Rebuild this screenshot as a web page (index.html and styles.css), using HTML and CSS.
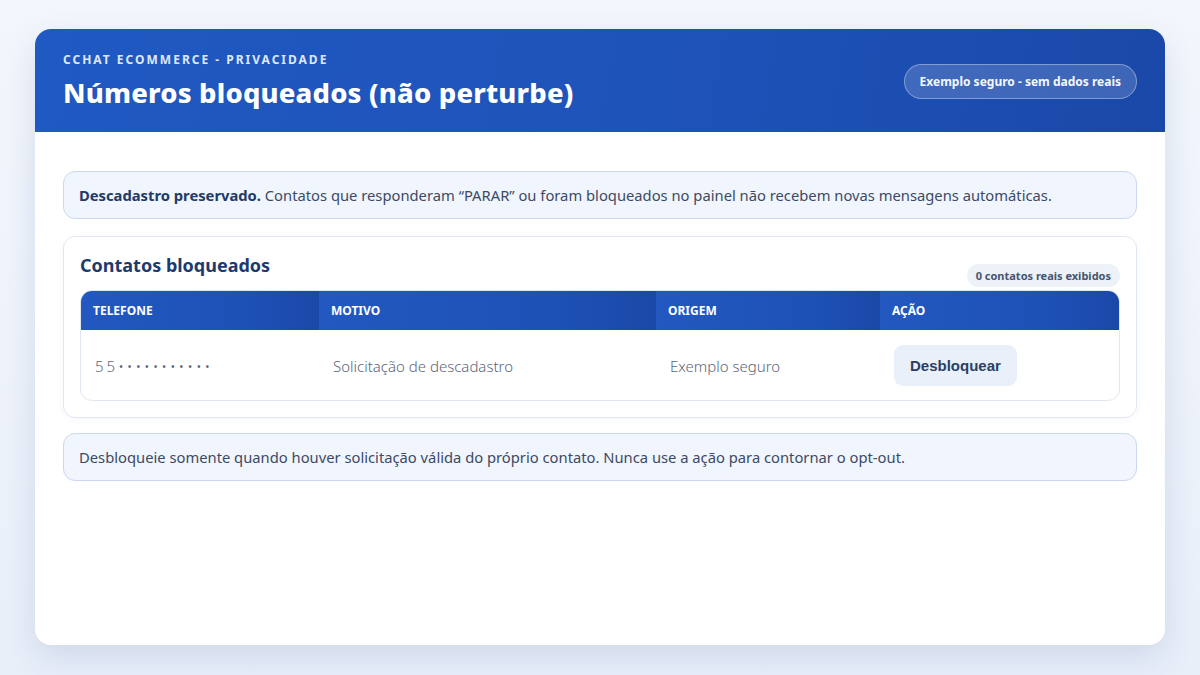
FILE: index.html
```html
<!DOCTYPE html>
<html lang="pt-BR">
<head>
<meta charset="utf-8">
<title>Números bloqueados</title>
<link rel="stylesheet" href="styles.css">
</head>
<body>
<main class="panel">
  <header class="panel-head">
    <div class="head-text">
      <div class="eyebrow">CCHAT ECOMMERCE - PRIVACIDADE</div>
      <h1 class="title">Números bloqueados (não perturbe)</h1>
    </div>
    <span class="safe-pill">Exemplo seguro - sem dados reais</span>
  </header>

  <section class="panel-body">
    <div class="note"><strong>Descadastro preservado.</strong> Contatos que responderam “PARAR” ou foram bloqueados no painel não recebem novas mensagens automáticas.</div>

    <div class="card">
      <div class="card-head">
        <h2 class="card-title">Contatos bloqueados</h2>
        <span class="count">0 contatos reais exibidos</span>
      </div>
      <div class="table-wrap">
        <table class="blocked">
          <thead>
            <tr>
              <th class="c-phone">TELEFONE</th>
              <th class="c-reason">MOTIVO</th>
              <th class="c-origin">ORIGEM</th>
              <th class="c-action">AÇÃO</th>
            </tr>
          </thead>
          <tbody>
            <tr>
              <td class="phone">55•••••••••••</td>
              <td>Solicitação de descadastro</td>
              <td>Exemplo seguro</td>
              <td><button class="unblock" type="button">Desbloquear</button></td>
            </tr>
          </tbody>
        </table>
      </div>
    </div>

    <div class="note plain">Desbloqueie somente quando houver solicitação válida do próprio contato. Nunca use a ação para contornar o opt-out.</div>
  </section>
</main>
</body>
</html>
```

FILE: styles.css
```css
* { box-sizing: border-box; }

html, body { height: 100%; }

body {
  margin: 0;
  padding: 29px 35px 30px;
  background: linear-gradient(180deg, #f3f6fc 0%, #e9eff9 100%);
  font-family: "Noto Sans", "Open Sans", sans-serif;
  color: #3b4a66;
}

.panel {
  height: 616px;
  background: #ffffff;
  border-radius: 16px;
  overflow: hidden;
  box-shadow: 0 12px 32px rgba(40, 80, 150, 0.14);
}

.panel-head {
  height: 103px;
  padding: 23px 28px 0;
  display: flex;
  justify-content: space-between;
  align-items: flex-start;
  background: linear-gradient(100deg, #2059c2 0%, #1e52b8 60%, #1a48a8 100%);
  color: #fff;
}

.eyebrow {
  font-size: 12px;
  font-weight: 700;
  letter-spacing: 2px;
  color: #dfe8fa;
  line-height: 16px;
}

.title {
  margin: 8px 0 0;
  font-size: 27.4px;
  font-weight: 800;
  line-height: 34px;
  letter-spacing: 0.2px;
}

.safe-pill {
  margin-top: 12px;
  height: 35px;
  padding: 0 15px;
  display: flex;
  align-items: center;
  border-radius: 18px;
  background: rgba(255, 255, 255, 0.16);
  border: 1px solid rgba(255, 255, 255, 0.35);
  font-size: 12px;
  font-weight: 700;
  color: #f4f7ff;
}

.panel-body {
  padding: 39px 28px 0;
  display: flex;
  flex-direction: column;
}

.note {
  min-height: 48px;
  padding: 0 15px;
  display: flex;
  align-items: center;
  background: #f0f5fe;
  border: 1px solid #cad8ee;
  border-radius: 12px;
  font-size: 14.75px;
  color: #3d4a63;
  white-space: pre-wrap;
}

.note strong {
  font-weight: 700;
  color: #223a66;
}

.note.plain { margin-top: 15px; }

.card {
  margin-top: 17px;
  border: 1px solid #e0e7f2;
  border-radius: 12px;
  padding: 16px;
  box-shadow: 0 2px 8px rgba(40, 80, 150, 0.04);
}

.card-head {
  height: 37px;
  display: flex;
  justify-content: space-between;
  align-items: flex-start;
}

.card-title {
  margin: 0;
  font-size: 18px;
  font-weight: 700;
  color: #1d3a70;
  line-height: 24px;
}

.count {
  margin-top: 11px;
  height: 23px;
  padding: 0 9px;
  display: flex;
  align-items: center;
  border-radius: 12px;
  background: #edf2f9;
  font-size: 11px;
  font-weight: 700;
  color: #45556f;
}

.table-wrap {
  border: 1px solid #e0e7f2;
  border-radius: 12px;
  overflow: hidden;
}

.blocked {
  width: 100%;
  border-collapse: collapse;
}

.blocked th {
  height: 39px;
  padding: 0 12px;
  text-align: left;
  font-size: 12px;
  font-weight: 700;
  color: #ffffff;
  background: linear-gradient(90deg, #2258c0 0%, #1e51b6 70%, #1a48a8 100%);
}

.c-phone { width: 238px; }
.c-reason { width: 337px; }
.c-origin { width: 224px; }

.blocked td {
  height: 70px;
  padding: 1px 14px 0;
  font-size: 15px;
  font-weight: 300;
  color: #5c667a;
}

.blocked td.phone { letter-spacing: 3px; }

.unblock {
  height: 41px;
  padding: 0 16px;
  border: 0;
  border-radius: 9px;
  background: #e9f0fa;
  font-family: "Liberation Sans", Arial, sans-serif;
  font-size: 15px;
  font-weight: 700;
  color: #2a3e66;
}
```
